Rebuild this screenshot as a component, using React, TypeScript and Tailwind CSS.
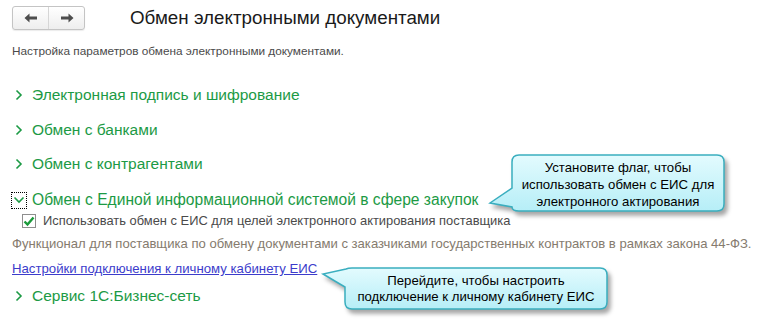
import React from 'react';

const GREEN = 'text-[#1c9a45]';

const Chevron: React.FC = () => (
  <svg width="8" height="12" viewBox="0 0 8 12">
    <path d="M1.5 1.5 L6 6 L1.5 10.5" fill="none" stroke="#1c9a45" strokeWidth="1.6" />
  </svg>
);

const SectionHeader: React.FC<{ title: string; mt: string }> = ({ title, mt }) => (
  <div className={`${mt} flex h-[20px] items-center pl-[15px]`}>
    <Chevron />
    <span className={`ml-[9px] text-[15.5px] ${GREEN}`}>{title}</span>
  </div>
);

interface CalloutProps {
  className: string;
  width: number;
  height: number;
  path: string;
  textClass: string;
  lines: string[];
}

// выноска-подсказка поверх формы
const Callout: React.FC<CalloutProps> = ({ className, width, height, path, textClass, lines }) => (
  <div className={`absolute ${className}`}>
    <svg
      width={width}
      height={height}
      className="absolute left-0 top-0 overflow-visible drop-shadow-[3px_4px_2px_rgba(0,0,0,0.35)]"
    >
      <defs>
        <linearGradient id={`g${width}`} x1="0" y1="0" x2="0" y2="1">
          <stop offset="0" stopColor="#e3fbfe" />
          <stop offset="1" stopColor="#b6eef7" />
        </linearGradient>
      </defs>
      <path d={path} fill={`url(#g${width})`} stroke="#3aaebf" strokeWidth="1.5" />
    </svg>
    <div className={`absolute flex flex-col items-center justify-center text-center text-[13.2px] text-black ${textClass}`}>
      {lines.map((l) => (
        <div key={l}>{l}</div>
      ))}
    </div>
  </div>
);

export default function App() {
  return (
    <div className="relative h-[323px] w-[760px] overflow-hidden bg-white font-['Liberation_Sans',Arial,sans-serif]">
      {/* шапка */}
      <div className="mt-[6px] flex h-[24px] items-center pl-[12px]">
        <div className="flex h-[24px] w-[73px] rounded-[3px] border border-[#c4c4c4] bg-gradient-to-b from-white to-[#eeeeee] shadow-[0_1px_1px_rgba(0,0,0,0.08)]">
          <div className="flex flex-1 items-center justify-center border-r border-[#d6d6d6]">
            <svg width="14" height="10" viewBox="0 0 14 10">
              <path d="M0.5 5 L5.5 0.5 V3.5 H13 V6.5 H5.5 V9.5 Z" fill="#4d4d4d" />
            </svg>
          </div>
          <div className="flex flex-1 items-center justify-center">
            <svg width="14" height="10" viewBox="0 0 14 10">
              <path d="M13.5 5 L8.5 0.5 V3.5 H1 V6.5 H8.5 V9.5 Z" fill="#4d4d4d" />
            </svg>
          </div>
        </div>
        <div className="ml-[45px] text-[18.8px] text-[#1a1a1a]">Обмен электронными документами</div>
      </div>

      <div className="mt-[14px] flex h-[16px] items-center pl-[12px] text-[11.8px] text-[#4a4a4a]">
        Настройка параметров обмена электронными документами.
      </div>

      <SectionHeader mt="mt-[25px]" title="Электронная подпись и шифрование" />
      <SectionHeader mt="mt-[15px]" title="Обмен с банками" />
      <SectionHeader mt="mt-[14px]" title="Обмен с контрагентами" />

      {/* раскрытая группа */}
      <div className="mt-[16px] flex h-[20px] items-center pl-[11px]">
        <div className="flex h-[17px] w-[16px] items-center justify-center border border-dotted border-black">
          <svg width="12" height="8" viewBox="0 0 12 8">
            <path d="M1.5 1.5 L6 6 L10.5 1.5" fill="none" stroke="#1c9a45" strokeWidth="1.6" />
          </svg>
        </div>
        <span className={`ml-[5px] text-[15.6px] ${GREEN}`}>
          Обмен с Единой информационной системой в сфере закупок
        </span>
      </div>

      <div className="mt-[3px] flex h-[16px] items-center pl-[22px]">
        <div className="flex h-[14px] w-[14px] items-center justify-center border border-[#8e8e8e] bg-white">
          <svg width="12" height="11" viewBox="0 0 12 11">
            <path d="M1.5 5.5 L4.5 8.5 L10.5 1.5" fill="none" stroke="#1a9a3a" strokeWidth="2.4" />
          </svg>
        </div>
        <span className="ml-[7px] text-[12.9px] text-[#4a4a4a]">
          Использовать обмен с ЕИС для целей электронного актирования поставщика
        </span>
      </div>

      <div className="mt-[7px] flex h-[16px] items-center pl-[12px] text-[13.1px] text-[#857b6e]">
        Функционал для поставщика по обмену документами с заказчиками государственных контрактов в рамках закона 44-ФЗ.
      </div>

      <div className="mt-[9px] flex h-[16px] items-center pl-[12px] text-[13.2px]">
        <span className="text-[#3c3ccb] underline">Настройки подключения к личному кабинету ЕИС</span>
      </div>

      <SectionHeader mt="mt-[9px]" title="Сервис 1С:Бизнес-сеть" />

      <Callout
        className="left-[486px] top-[150px]"
        width={246}
        height={66}
        path="M33 5 H231 Q238 5 238 12 V54 Q238 61 231 61 H33 Q26 61 26 57 L4 53 L26 38 V12 Q26 5 33 5 Z"
        textClass="left-[26px] top-[6px] h-[56px] w-[212px] leading-[17px]"
        lines={['Установите флаг, чтобы', 'использовать обмен с ЕИС для', 'электронного актирования']}
      />

      <Callout
        className="left-[320px] top-[265px]"
        width={292}
        height={52}
        path="M32 3 H280 Q287 3 287 10 V37 Q287 44 280 44 H32 Q25 44 25 37 V22 L3 9 L26 4 Q28 3 32 3 Z"
        textClass="left-[25px] top-[3px] h-[41px] w-[262px] leading-[16px]"
        lines={['Перейдите, чтобы настроить', 'подключение к личному кабинету ЕИС']}
      />
    </div>
  );
}
